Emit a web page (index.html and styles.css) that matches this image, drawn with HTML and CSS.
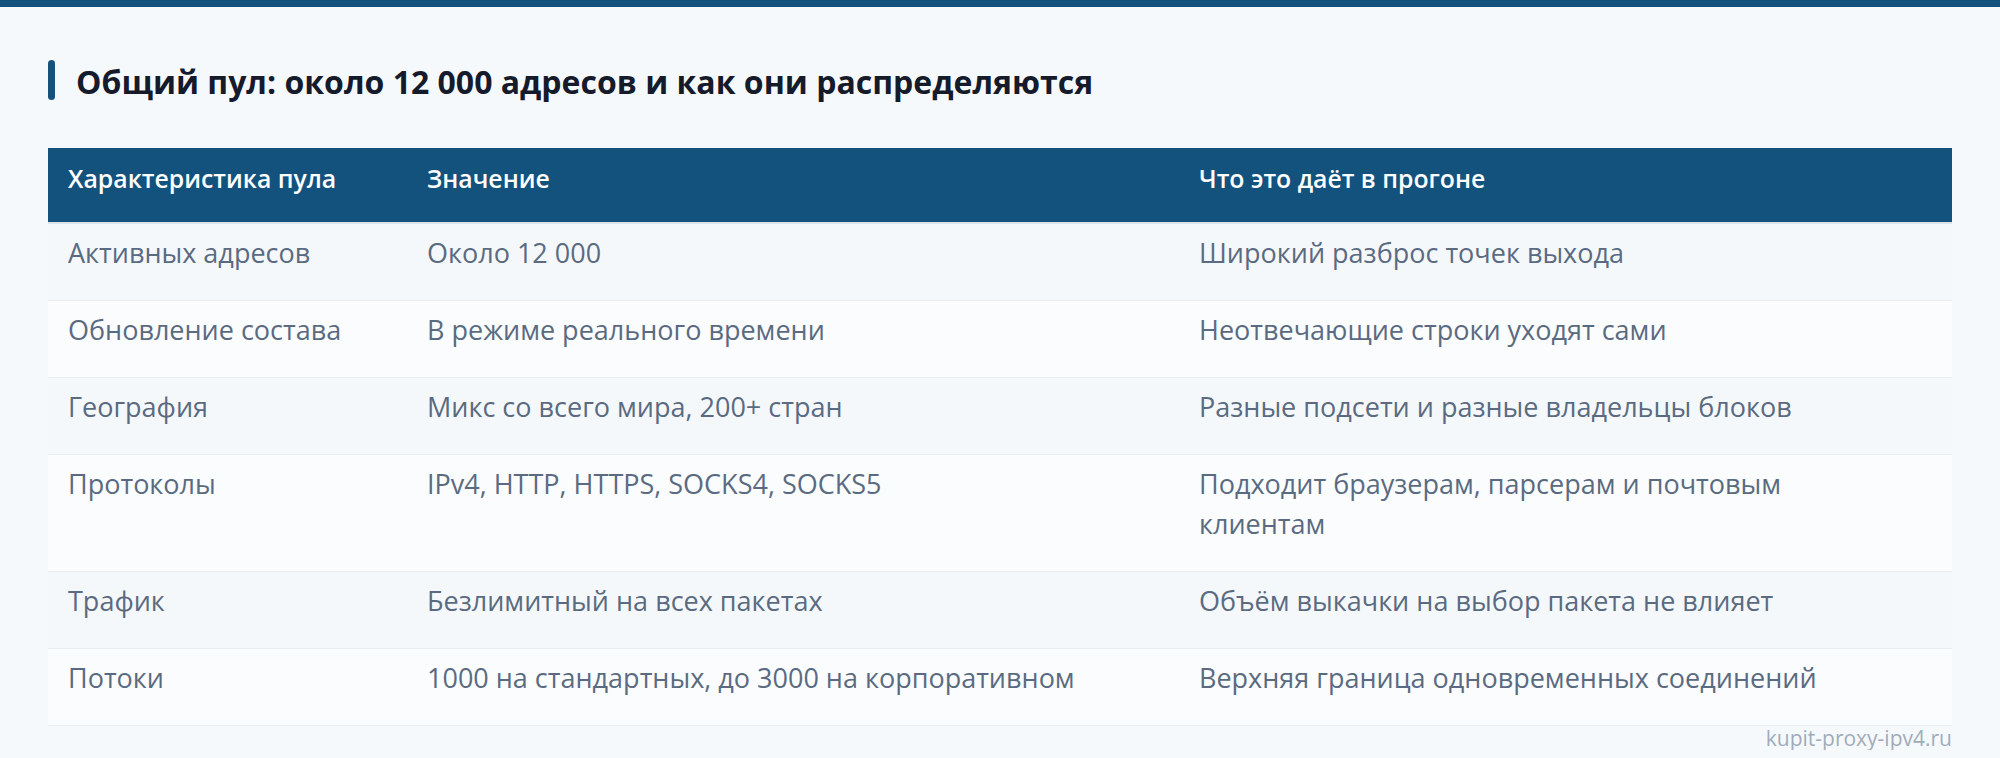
FILE: index.html
```html
<!DOCTYPE html>
<html lang="ru">
<head>
<meta charset="utf-8">
<title>Общий пул</title>
<link rel="stylesheet" href="styles.css">
</head>
<body>
<main class="page">
  <h2 class="title"><span class="title-bar"></span><span class="title-text">Общий пул: около 12 000 адресов и как они распределяются</span></h2>
  <table class="pool">
    <colgroup><col class="c1"><col class="c2"><col class="c3"></colgroup>
    <thead>
      <tr><th>Характеристика пула</th><th>Значение</th><th>Что это даёт в прогоне</th></tr>
    </thead>
    <tbody>
      <tr><td>Активных адресов</td><td>Около 12 000</td><td>Широкий разброс точек выхода</td></tr>
      <tr><td>Обновление состава</td><td>В режиме реального времени</td><td>Неотвечающие строки уходят сами</td></tr>
      <tr><td>География</td><td>Микс со всего мира, 200+ стран</td><td>Разные подсети и разные владельцы блоков</td></tr>
      <tr><td>Протоколы</td><td>IPv4, HTTP, HTTPS, SOCKS4, SOCKS5</td><td>Подходит браузерам, парсерам и почтовым клиентам</td></tr>
      <tr><td>Трафик</td><td>Безлимитный на всех пакетах</td><td>Объём выкачки на выбор пакета не влияет</td></tr>
      <tr><td>Потоки</td><td>1000 на стандартных, до 3000 на корпоративном</td><td>Верхняя граница одновременных соединений</td></tr>
    </tbody>
  </table>
  <div class="mark">kupit-proxy-ipv4.ru</div>
</main>
</body>
</html>
```
FILE: styles.css
```css
html, body { margin: 0; padding: 0; }
body {
  background: #f6f9fc;
  border-top: 7px solid #14527e;
  font-family: "Open Sans", "Noto Sans", sans-serif;
  color: #5a6b81;
}
.page { padding: 53px 48px 0; }
.title {
  display: flex;
  align-items: flex-start;
  gap: 21px;
  margin: 0 0 46px;
  font-size: 32px;
  line-height: 40px;
  font-weight: 700;
  color: #151b2b;
}
.title-bar { flex: 0 0 7px; height: 40px; border-radius: 4px; background: #14527e; }
.title-text { padding-top: 2px; }
.pool { width: 100%; border-collapse: collapse; table-layout: fixed; font-size: 27px; }
.c1 { width: 359px; }
.c2 { width: 772px; }
.pool th {
  background: #14527e; color: #fff; font-weight: 600; text-align: left;
  font-size: 24.8px; line-height: 34px; padding: 13px 20px 27px;
  border-bottom: 2px solid #dbe3ec;
}
.pool td { padding: 9px 48px 27px 20px; line-height: 40px; vertical-align: top; border-bottom: 1px solid #e9eef3; }
.pool tbody tr:nth-child(odd) td { background: #f5f8fb; }
.pool tbody tr:nth-child(even) td { background: #fbfcfe; }
.mark { text-align: right; font-size: 21px; line-height: 24px; color: #a0acba; }
```
